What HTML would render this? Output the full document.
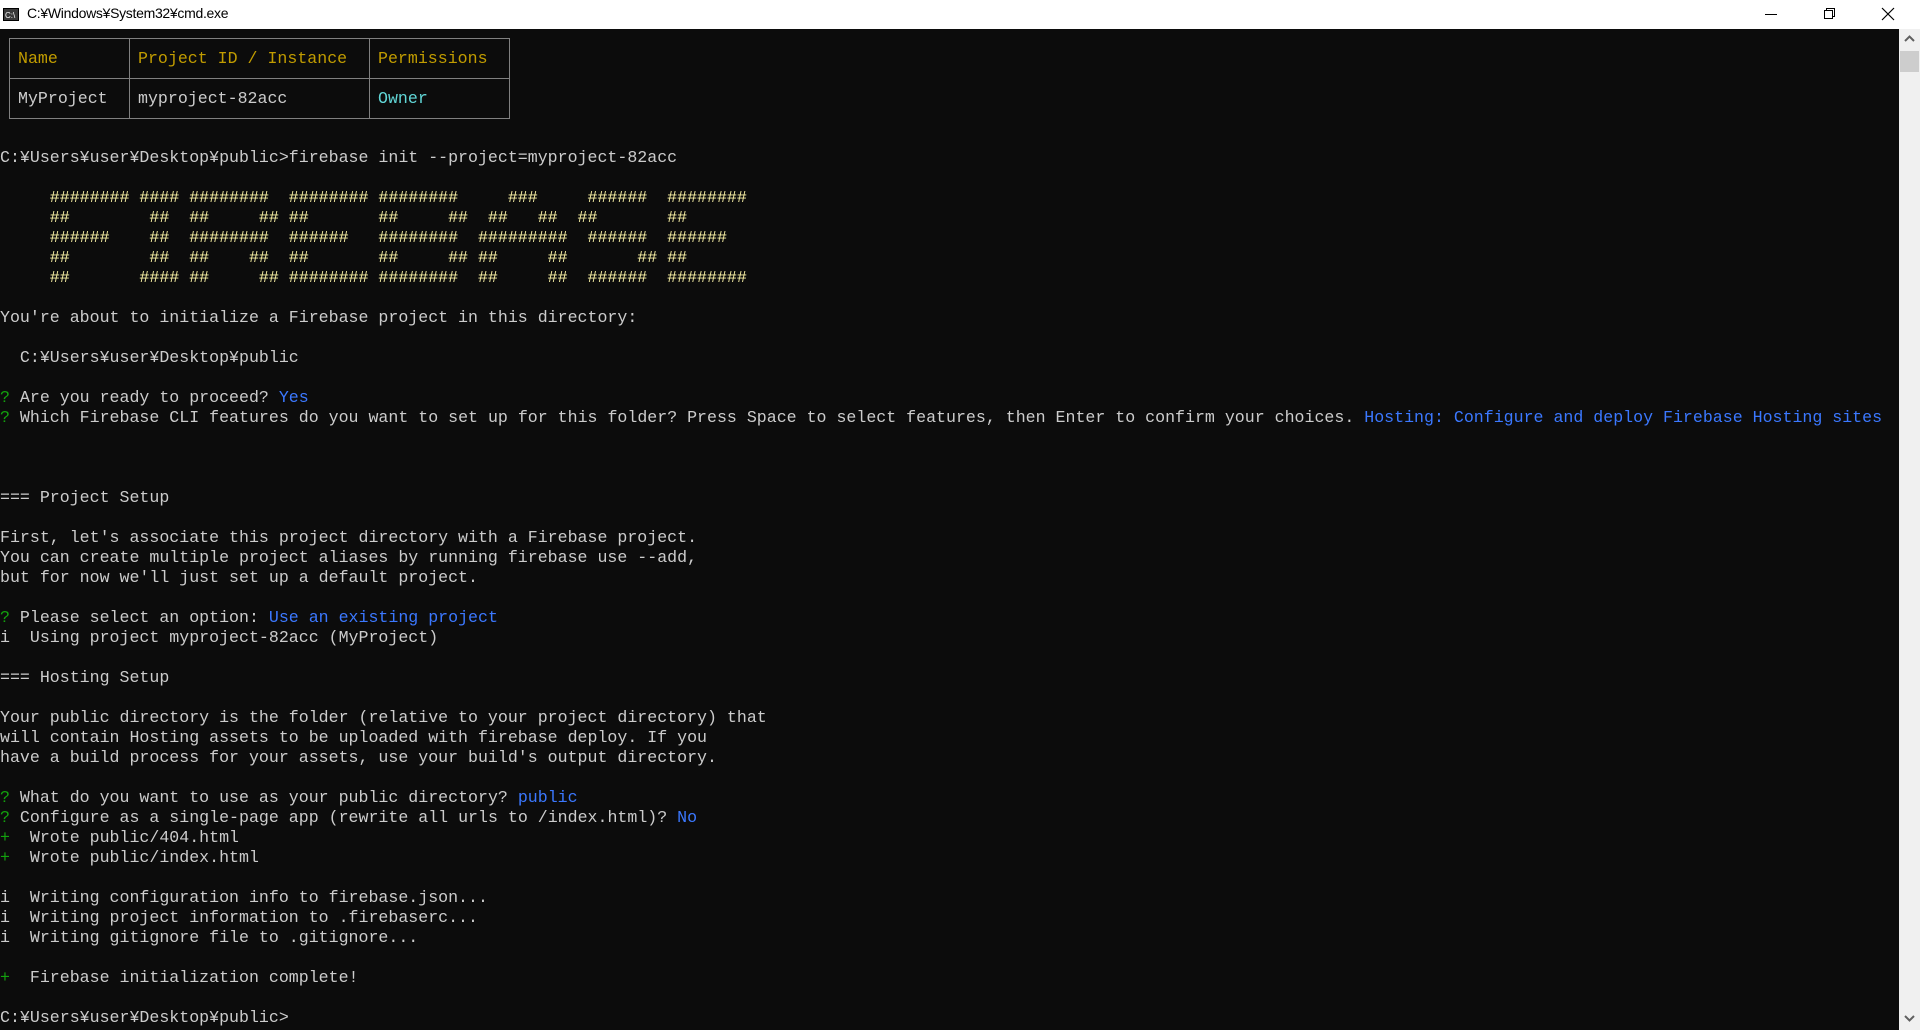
<!DOCTYPE html>
<html><head><meta charset="utf-8"><style>
*{margin:0;padding:0;box-sizing:border-box}
body{width:1920px;height:1030px;background:#0c0c0c;overflow:hidden;position:relative;font-family:"Liberation Mono","Noto Sans CJK JP",monospace;color:#cccccc}
#title{position:absolute;left:0;top:0;width:1920px;height:29px;background:#fff;color:#000;font-family:"Liberation Sans","Noto Sans CJK JP",sans-serif;font-size:14px}
#title .t{position:absolute;left:27px;top:5px;letter-spacing:-0.3px}
#sb{position:absolute;left:1899px;top:29px;width:21px;height:1001px;background:#f0f0f0}
#thumb{position:absolute;left:1px;top:22px;width:19px;height:21px;background:#cdcdcd}
pre{position:absolute;left:0;top:148px;font-family:"Liberation Mono","Noto Sans CJK JP",monospace;font-size:16.6px;line-height:20px;white-space:pre;color:#cccccc}
.y{color:#f9f1a5}.b{color:#3b78ff}.g{color:#13a10e}.dy{color:#c19c00}.c{color:#61d6d6}
table{position:absolute;left:9px;top:38px;border-collapse:collapse;font-size:16.6px;font-family:"Liberation Mono",monospace}
td{border:1px solid #808080;height:40px;padding:0 8px;vertical-align:middle}
</style></head><body>
<div id="title">
<svg style="position:absolute;left:3px;top:8px" width="16" height="13"><rect x="0" y="0" width="16" height="13" fill="#000"/><rect x="1" y="1" width="14" height="11" fill="#3a3a3a"/><text x="2" y="10" font-size="8" fill="#fff" font-family="Liberation Sans">C:\</text></svg>
<span class="t">C:¥Windows¥System32¥cmd.exe</span>
<svg style="position:absolute;left:1764px;top:8px" width="14" height="14"><line x1="1" y1="6.5" x2="13" y2="6.5" stroke="#000" stroke-width="1"/></svg>
<svg style="position:absolute;left:1823px;top:7px" width="14" height="14"><rect x="1.5" y="3.5" width="8" height="8" fill="none" stroke="#000"/><path d="M3.5 3.5V1.5H11.5V9.5H9.5" fill="none" stroke="#000"/></svg>
<svg style="position:absolute;left:1881px;top:7px" width="14" height="14"><path d="M1 1L13 13M13 1L1 13" stroke="#000" stroke-width="1.2"/></svg>
</div>
<div id="sb">
<svg style="position:absolute;left:5px;top:6px" width="11" height="8"><path d="M1 6L5.5 1.5L10 6" fill="none" stroke="#606060" stroke-width="2"/></svg>
<div id="thumb"></div>
<svg style="position:absolute;left:5px;top:985px" width="11" height="8"><path d="M1 2L5.5 6.5L10 2" fill="none" stroke="#606060" stroke-width="2"/></svg>
</div>
<table>
<tr><td class="dy" style="width:120px">Name</td><td class="dy" style="width:240px">Project ID / Instance</td><td class="dy" style="width:140px">Permissions</td></tr>
<tr><td>MyProject</td><td>myproject-82acc</td><td class="c">Owner</td></tr>
</table>
<pre>C:¥Users¥user¥Desktop¥public&gt;firebase init --project=myproject-82acc

<span class="y">     ######## #### ########  ######## ########     ###     ######  ########
     ##        ##  ##     ## ##       ##     ##  ##   ##  ##       ##
     ######    ##  ########  ######   ########  #########  ######  ######
     ##        ##  ##    ##  ##       ##     ## ##     ##       ## ##
     ##       #### ##     ## ######## ########  ##     ##  ######  ########</span>

You're about to initialize a Firebase project in this directory:

  C:¥Users¥user¥Desktop¥public

<span class="g">?</span> Are you ready to proceed? <span class="b">Yes</span>
<span class="g">?</span> Which Firebase CLI features do you want to set up for this folder? Press Space to select features, then Enter to confirm your choices. <span class="b">Hosting: Configure and deploy Firebase Hosting sites</span>



=== Project Setup

First, let's associate this project directory with a Firebase project.
You can create multiple project aliases by running firebase use --add,
but for now we'll just set up a default project.

<span class="g">?</span> Please select an option: <span class="b">Use an existing project</span>
i  Using project myproject-82acc (MyProject)

=== Hosting Setup

Your public directory is the folder (relative to your project directory) that
will contain Hosting assets to be uploaded with firebase deploy. If you
have a build process for your assets, use your build's output directory.

<span class="g">?</span> What do you want to use as your public directory? <span class="b">public</span>
<span class="g">?</span> Configure as a single-page app (rewrite all urls to /index.html)? <span class="b">No</span>
<span class="g">+</span>  Wrote public/404.html
<span class="g">+</span>  Wrote public/index.html

i  Writing configuration info to firebase.json...
i  Writing project information to .firebaserc...
i  Writing gitignore file to .gitignore...

<span class="g">+</span>  Firebase initialization complete!

C:¥Users¥user¥Desktop¥public&gt;</pre>
</body></html>
